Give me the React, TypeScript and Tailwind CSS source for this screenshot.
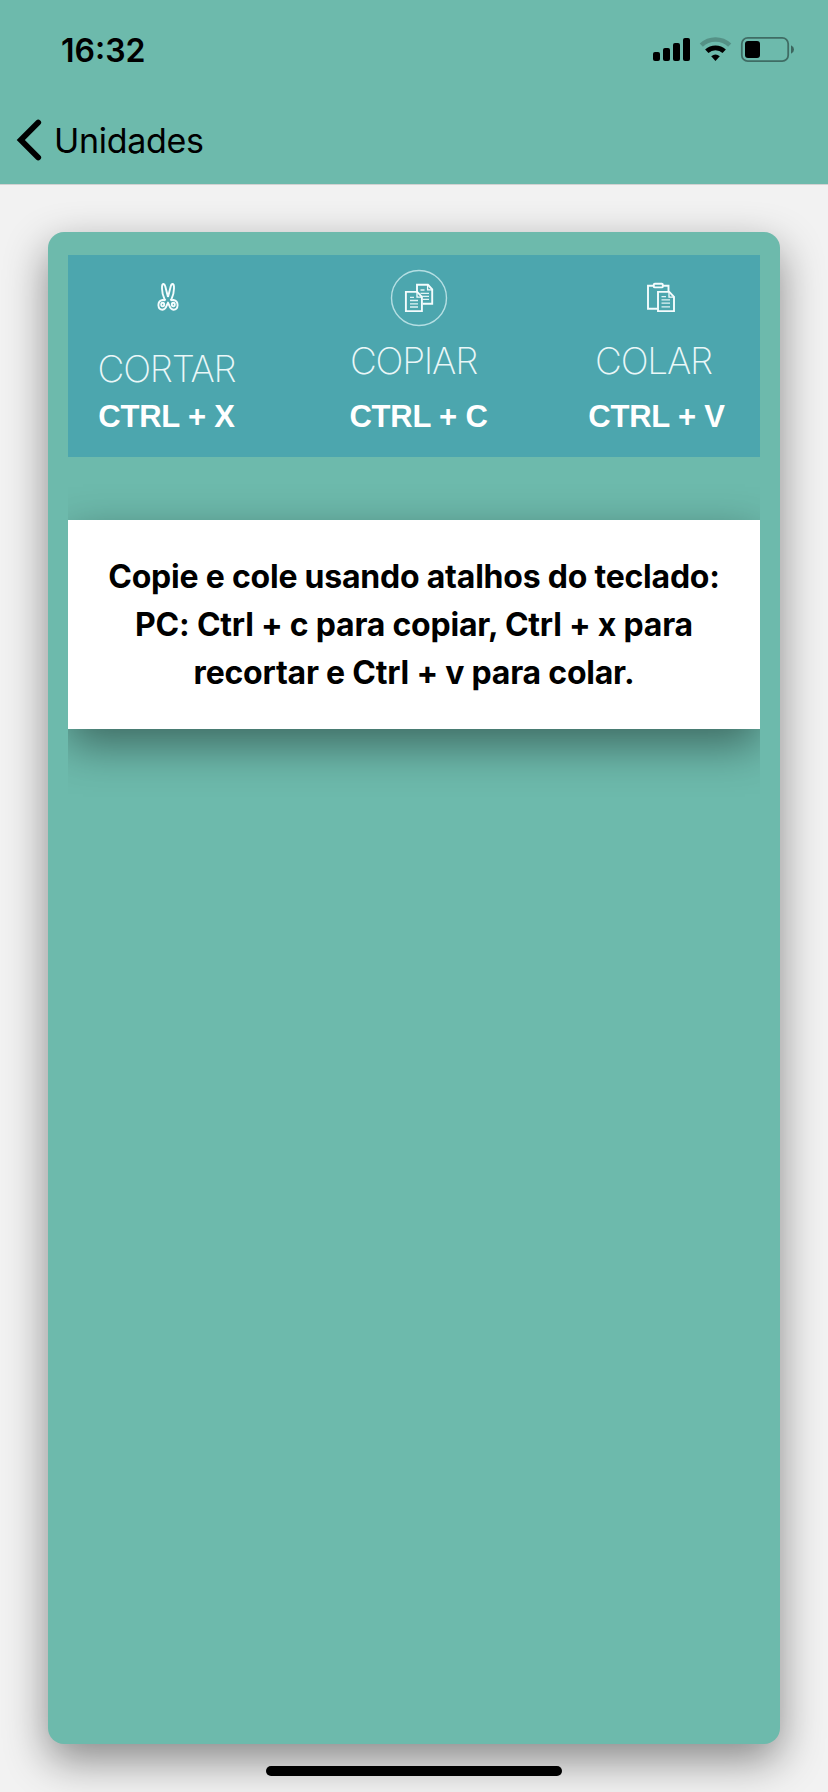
import React from "react";

function StatusIcons() {
  return (
    <svg className="h-[30px] w-[144px]" viewBox="652 34 144 30" fill="none">
      <g fill="#000">
        <rect x="653" y="52" width="7" height="9" rx="2" />
        <rect x="663" y="48" width="7" height="13" rx="2" />
        <rect x="673" y="43" width="7" height="18" rx="2" />
        <rect x="683" y="38" width="7" height="23" rx="2" />
      </g>
      <path d="M701.3 45.2a20.4 20.4 0 0 1 28.4 0" stroke="#000" strokeOpacity="0.22" strokeWidth="4.6" />
      <path d="M706.8 51.3a12.6 12.6 0 0 1 17.4 0" stroke="#000" strokeWidth="4.8" />
      <path d="M711.2 56.3q4.3-3.6 8.6 0l-4.3 4.6z" fill="#000" />
      <rect x="741.8" y="37.8" width="46.4" height="23.4" rx="6" stroke="#000" strokeOpacity="0.42" strokeWidth="1.8" />
      <rect x="745" y="41" width="15" height="17" rx="3" fill="#000" />
      <path d="M791 45.3q3 1.4 3 4.2t-3 4.2z" fill="#000" fillOpacity="0.45" />
    </svg>
  );
}

function ScissorsIcon() {
  return (
    <svg className="h-[58px] w-[58px]" viewBox="-29 -29 58 58" fill="none" stroke="#f4fcfd" strokeWidth="1.9" strokeLinejoin="round">
      <path d="M0 -1L-2.700 -11.500Q-3.400 -14.200 -4.700 -14Q-6.200 -13.700 -6 -9.500Q-5.800 -3.500 -3.600 0.800L-2.600 2.400" />
      <path d="M0 -1L2.700 -11.500Q3.400 -14.200 4.700 -14Q6.200 -13.700 6 -9.500Q5.800 -3.500 3.600 0.800L2.600 2.400" />
      <path d="M-2.600 2.400Q-4 1.900 -5.500 2Q-9.600 2.600 -9.600 7.300Q-9.300 11.700 -5.600 11.700Q-2.600 11.400 -1.500 8L0 4.600L1.500 8Q2.600 11.400 5.600 11.700Q9.300 11.700 9.600 7.300Q9.600 2.600 5.500 2Q4 1.900 2.600 2.400" />
      <ellipse cx="-5.300" cy="6.600" rx="1.500" ry="1.800" />
      <ellipse cx="5.300" cy="6.600" rx="1.500" ry="1.800" />
    </svg>
  );
}

function CopyIcon() {
  return (
    <svg className="h-[58px] w-[58px]" viewBox="389 269 58 58" fill="none">
      <circle cx="418" cy="298" r="27.500" stroke="#b5dfe3" strokeWidth="1.400" />
      <g stroke="#f4fcfd" strokeWidth="1.900">
        <path d="M416 292v-7.200h11l4.200 4.600v14.300h-9.500" />
        <path d="M426.600 284.800v5h4.600" strokeWidth="1.300" />
        <path d="M404.900 291.900h11.300l4.700 5v14.200h-16z" />
        <path d="M416 292v5.200h5" strokeWidth="1.300" />
      </g>
      <path d="M419.500 290h4M419.500 293.300h8.500M421 296.400h7M422 299.400h6M409 297.400h4M409 300.500h8M409 303.800h8M409 307h8" stroke="#e0f3f5" strokeWidth="1.300" />
    </svg>
  );
}

function PasteIcon() {
  return (
    <svg className="h-[58px] w-[58px]" viewBox="631 269 58 58" fill="none">
      <g stroke="#f4fcfd" strokeWidth="1.900">
        <path d="M653 285.800h-6v23h9.500M662 285.800h5.500v5.500" />
        <rect x="652.800" y="283.700" width="9" height="3.700" rx="1" />
        <path d="M657 291.900h11.300l4.700 5v14.200h-16z" />
        <path d="M668 292v5.200h5" strokeWidth="1.300" />
      </g>
      <path d="M660.500 296.600h4.500M660.500 299.900h8.500M660.500 303.200h8.500M660.500 306.800h8.500" stroke="#e0f3f5" strokeWidth="1.300" />
    </svg>
  );
}

const thin =
  "font-[Inter,sans-serif] text-[37px] leading-[40px] font-extralight whitespace-nowrap tracking-[-1.2px] text-[#eaf7f8]";
const bold =
  "font-['Liberation_Sans',Arial,sans-serif] text-[31px] leading-[36px] font-bold whitespace-nowrap tracking-[-0.2px] text-white";

function Banner() {
  return (
    <div className="flex h-[202px] shrink-0 justify-between bg-[#4ca6ae] pt-3.5 pr-[35px] pl-[30px]">
      <div className="flex w-[137px] flex-col items-center">
        <div className="pl-0.5">
          <ScissorsIcon />
        </div>
        <span className={`${thin} mt-[22px]`}>CORTAR</span>
        <span className={`${bold} mt-[10px]`}>CTRL + X</span>
      </div>
      <div className="ml-[14px] flex w-[137px] flex-col items-center">
        <CopyIcon />
        <span className={`${thin} mt-3.5 mr-2.5`}>COPIAR</span>
        <span className={`${bold} mt-[18px]`}>CTRL + C</span>
      </div>
      <div className="flex w-[137px] flex-col items-center">
        <div className="pl-2">
          <PasteIcon />
        </div>
        <span className={`${thin} mt-3.5 mr-1.5`}>COLAR</span>
        <span className={`${bold} mt-[18px]`}>CTRL + V</span>
      </div>
    </div>
  );
}

export default function App() {
  return (
    <div className="relative flex h-[1792px] w-[828px] flex-col overflow-hidden bg-[#f2f2f2] font-[Inter,sans-serif] text-black">
      <header className="relative z-10 h-[185px] shrink-0 border-b border-[#d2d2d2] bg-[#6dbaac]">
        <div className="flex h-[98px] items-center justify-between pr-8 pl-[61px]">
          <span className="pt-[3px] text-[32px] leading-10 font-semibold">16:32</span>
          <StatusIcons />
        </div>
        <div className="flex h-[84px] items-center pl-4">
          <svg className="h-[44px] w-[26px]" viewBox="0 0 26 44" fill="none">
            <path d="M22.200 4.500L4.800 22 22.200 39.500" stroke="#000" strokeWidth="5.800" strokeLinecap="round" strokeLinejoin="miter" />
          </svg>
          <span className="ml-3 pt-[2px] text-[34px] leading-10 tracking-[-0.3px]">Unidades</span>
        </div>
      </header>
      <main className="mx-12 mt-[47px] flex h-[1512px] shrink-0 flex-col rounded-2xl bg-[#6dbaac] px-5 pt-[23px] shadow-[0_16px_43px_rgba(0,0,0,0.44)]">
        <Banner />
        <div className="flex-1 overflow-hidden pt-[63px]">
          <p className="h-[209px] bg-white pt-[33px] text-center text-[32px] leading-[48px] font-bold tracking-[-0.22px] shadow-[0_16px_43px_rgba(0,0,0,0.44)]">
            Copie e cole usando atalhos do teclado:
            <br />
            PC: Ctrl + c para copiar, Ctrl + x para
            <br />
            recortar e Ctrl + v para colar.
          </p>
        </div>
      </main>
      <div className="absolute bottom-[16px] left-[266px] h-[10px] w-[296px] rounded-full bg-black" />
    </div>
  );
}
